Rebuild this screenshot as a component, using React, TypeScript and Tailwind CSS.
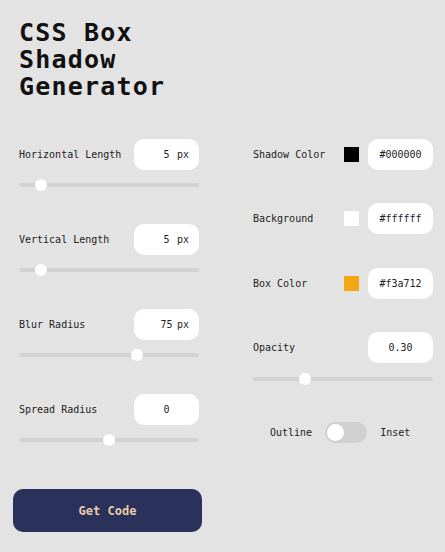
import React from "react";

const Slider = ({ center }: { center: number }) => (
  <div className="relative mt-[9px] flex h-[12px] w-full items-center">
    <div className="h-[4px] w-full rounded-full bg-[#d2d2d2]" />
    <div
      className="absolute top-0 h-[12px] w-[12px] rounded-full bg-white"
      style={{ left: center - 6 }}
    />
  </div>
);

const NumBox = ({ value, unit }: { value: string; unit?: string }) => (
  <div className="relative flex h-[31px] w-[65px] items-center justify-center rounded-[10px] bg-white text-[10px] text-[#222]">
    <span>{value}</span>
    {unit && <span className="absolute right-[10px]">{unit}</span>}
  </div>
);

const LeftRow = ({ label, value, unit, center, first }: { label: string; value: string; unit?: string; center: number; first?: boolean }) => (
  <div className={first ? "flex flex-col" : "mt-[33px] flex flex-col"}>
    <div className="flex h-[31px] items-center justify-between">
      <span className="text-[10px] text-[#222]">{label}</span>
      <NumBox value={value} unit={unit} />
    </div>
    <Slider center={center} />
  </div>
);

const ColorRow = ({ label, color, cls }: { label: string; color: string; cls: string }) => (
  <div className="flex h-[31px] items-center">
    <span className="w-[91px] text-[10px] text-[#222]">{label}</span>
    <div className={`h-[15px] w-[15px] ${cls}`} />
    <div className="ml-[9px] flex h-[31px] w-[65px] items-center justify-center rounded-[10px] bg-white text-[10px] text-[#222]">
      {color}
    </div>
  </div>
);

export default function App() {
  return (
    <div className="min-h-screen w-full bg-[#e3e3e3] font-['DejaVu_Sans_Mono',monospace]">
      <div className="pl-[19px] pt-[19px]">
        <h1 className="text-[25px] font-bold leading-[27px] tracking-[1.2px] text-[#111]">
          CSS Box
          <br />
          Shadow
          <br />
          Generator
        </h1>
      </div>
      <div className="mt-[39px] flex gap-[54px] pl-[19px]">
        <div className="flex w-[180px] flex-col">
          <LeftRow first label="Horizontal Length" value="5" unit="px" center={22} />
          <LeftRow label="Vertical Length" value="5" unit="px" center={22} />
          <LeftRow label="Blur Radius" value="75" unit="px" center={118} />
          <LeftRow label="Spread Radius" value="0" center={90} />
        </div>
        <div className="flex w-[180px] flex-col">
          <ColorRow label="Shadow Color" color="#000000" cls="bg-black" />
          <div className="mt-[33px]">
            <ColorRow label="Background" color="#ffffff" cls="bg-white" />
          </div>
          <div className="mt-[34px]">
            <ColorRow label="Box Color" color="#f3a712" cls="bg-[#f3a712]" />
          </div>
          <div className="mt-[33px] flex flex-col">
            <div className="flex h-[31px] items-center justify-between">
              <span className="text-[10px] text-[#222]">Opacity</span>
              <NumBox value="0.30" />
            </div>
            <div className="mt-[1px]">
              <Slider center={52} />
            </div>
          </div>
          <div className="mt-[37px] flex items-center gap-[13px] pl-[17px] text-[10px] text-[#222]">
            <span>Outline</span>
            <div className="flex h-[21px] w-[42px] items-center rounded-full bg-[#d0d0d0] px-[2px]">
              <div className="h-[17px] w-[17px] rounded-full bg-white" />
            </div>
            <span>Inset</span>
          </div>
        </div>
      </div>
      <div className="pl-[13px] pt-[43px]">
        <button className="flex h-[43px] w-[189px] items-center justify-center rounded-[10px] bg-[#2a315a] text-[12px] font-bold text-[#e9cca9]">
          Get Code
        </button>
      </div>
    </div>
  );
}
